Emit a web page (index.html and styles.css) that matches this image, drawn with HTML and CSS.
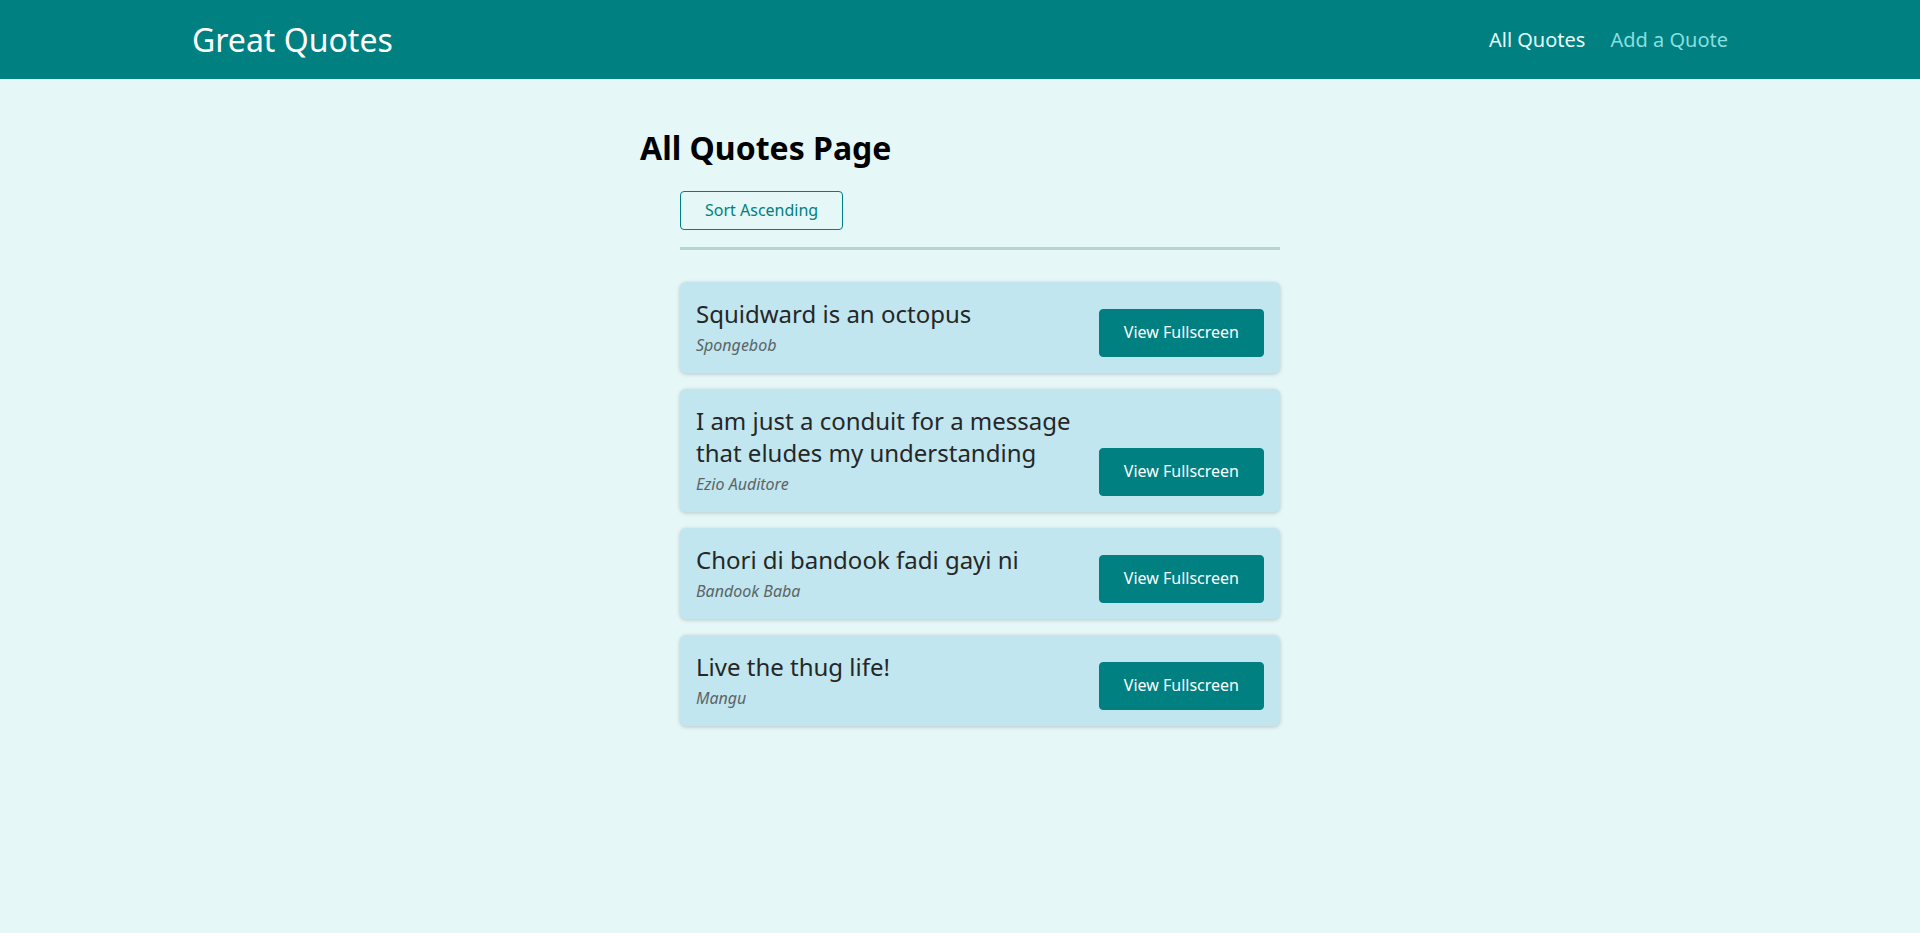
FILE: index.html
```html
<!DOCTYPE html>
<html lang="en">
<head>
<meta charset="utf-8">
<title>Great Quotes</title>
<link rel="stylesheet" href="styles.css">
</head>
<body>
<header class="header">
  <div class="logo">Great Quotes</div>
  <nav class="nav">
    <a class="nav-link active" href="#">All Quotes</a>
    <a class="nav-link" href="#">Add a Quote</a>
  </nav>
</header>
<main class="main">
  <h1 class="page-title">All Quotes Page</h1>
  <div class="content">
    <div class="sorting">
      <button class="btn-outline">Sort Ascending</button>
    </div>
    <ul class="quote-list">
      <li class="quote-item">
        <figure class="quote">
          <blockquote class="quote-text">Squidward is an octopus</blockquote>
          <figcaption class="quote-author">Spongebob</figcaption>
        </figure>
        <a class="btn" href="#">View Fullscreen</a>
      </li>
      <li class="quote-item">
        <figure class="quote">
          <blockquote class="quote-text">I am just a conduit for a message that eludes my understanding</blockquote>
          <figcaption class="quote-author">Ezio Auditore</figcaption>
        </figure>
        <a class="btn" href="#">View Fullscreen</a>
      </li>
      <li class="quote-item">
        <figure class="quote">
          <blockquote class="quote-text">Chori di bandook fadi gayi ni</blockquote>
          <figcaption class="quote-author">Bandook Baba</figcaption>
        </figure>
        <a class="btn" href="#">View Fullscreen</a>
      </li>
      <li class="quote-item">
        <figure class="quote">
          <blockquote class="quote-text">Live the thug life!</blockquote>
          <figcaption class="quote-author">Mangu</figcaption>
        </figure>
        <a class="btn" href="#">View Fullscreen</a>
      </li>
    </ul>
  </div>
</main>
</body>
</html>
```

FILE: styles.css
```css
* {
  box-sizing: border-box;
}

html, body {
  margin: 0;
  padding: 0;
}

body {
  font-family: "Noto Sans", "Open Sans", sans-serif;
  background: #e5f7f7;
  color: #000;
  min-height: 933px;
}

.header {
  height: 79px;
  background: #008080;
  display: flex;
  align-items: center;
  justify-content: space-between;
  padding: 0 10%;
}

.logo {
  font-size: 32px;
  color: #ffffff;
  line-height: 1.362;
}

.nav {
  display: flex;
  gap: 25px;
  align-items: center;
}

.nav-link {
  font-size: 20px;
  color: #88dfdf;
  text-decoration: none;
}

.nav-link.active {
  color: #e6fcfc;
}

.main {
  width: 40rem;
  margin: 0 auto;
}

.page-title {
  font-size: 32px;
  font-weight: 700;
  line-height: 1.362;
  margin: 47px 0 21px;
}

.content {
  padding-left: 40px;
}

.sorting {
  padding-bottom: 17px;
  border-bottom: 3px solid #b3d5d5;
  margin-bottom: 32px;
}

.btn-outline {
  font-family: inherit;
  font-size: 16px;
  line-height: 1.362;
  color: #008080;
  background: transparent;
  border: 1px solid #008080;
  border-radius: 4px;
  padding: 8px 24px;
  height: 39px;
  cursor: pointer;
}

.quote-list {
  list-style: none;
  margin: 0;
  padding: 0;
}

.quote-item {
  display: flex;
  align-items: flex-end;
  justify-content: space-between;
  gap: 16px;
  background: #c1e6ef;
  border-radius: 6px;
  padding: 16px;
  margin-bottom: 16px;
  box-shadow: 0 1px 4px rgba(0, 0, 0, 0.2);
}

.quote {
  margin: 0;
  flex: 1;
}

.quote-text {
  margin: 0;
  font-size: 24px;
  line-height: 1.362;
  color: #262626;
}

.quote-author {
  margin-top: 4.5px;
  font-size: 16px;
  line-height: 1.362;
  font-style: italic;
  color: #5c6467;
}

.btn {
  flex: none;
  display: inline-block;
  font-size: 16px;
  line-height: 1.362;
  color: #ffffff;
  background: #008080;
  border: 1px solid #008080;
  border-radius: 4px;
  padding: 12px 24px;
  text-decoration: none;
}
```
